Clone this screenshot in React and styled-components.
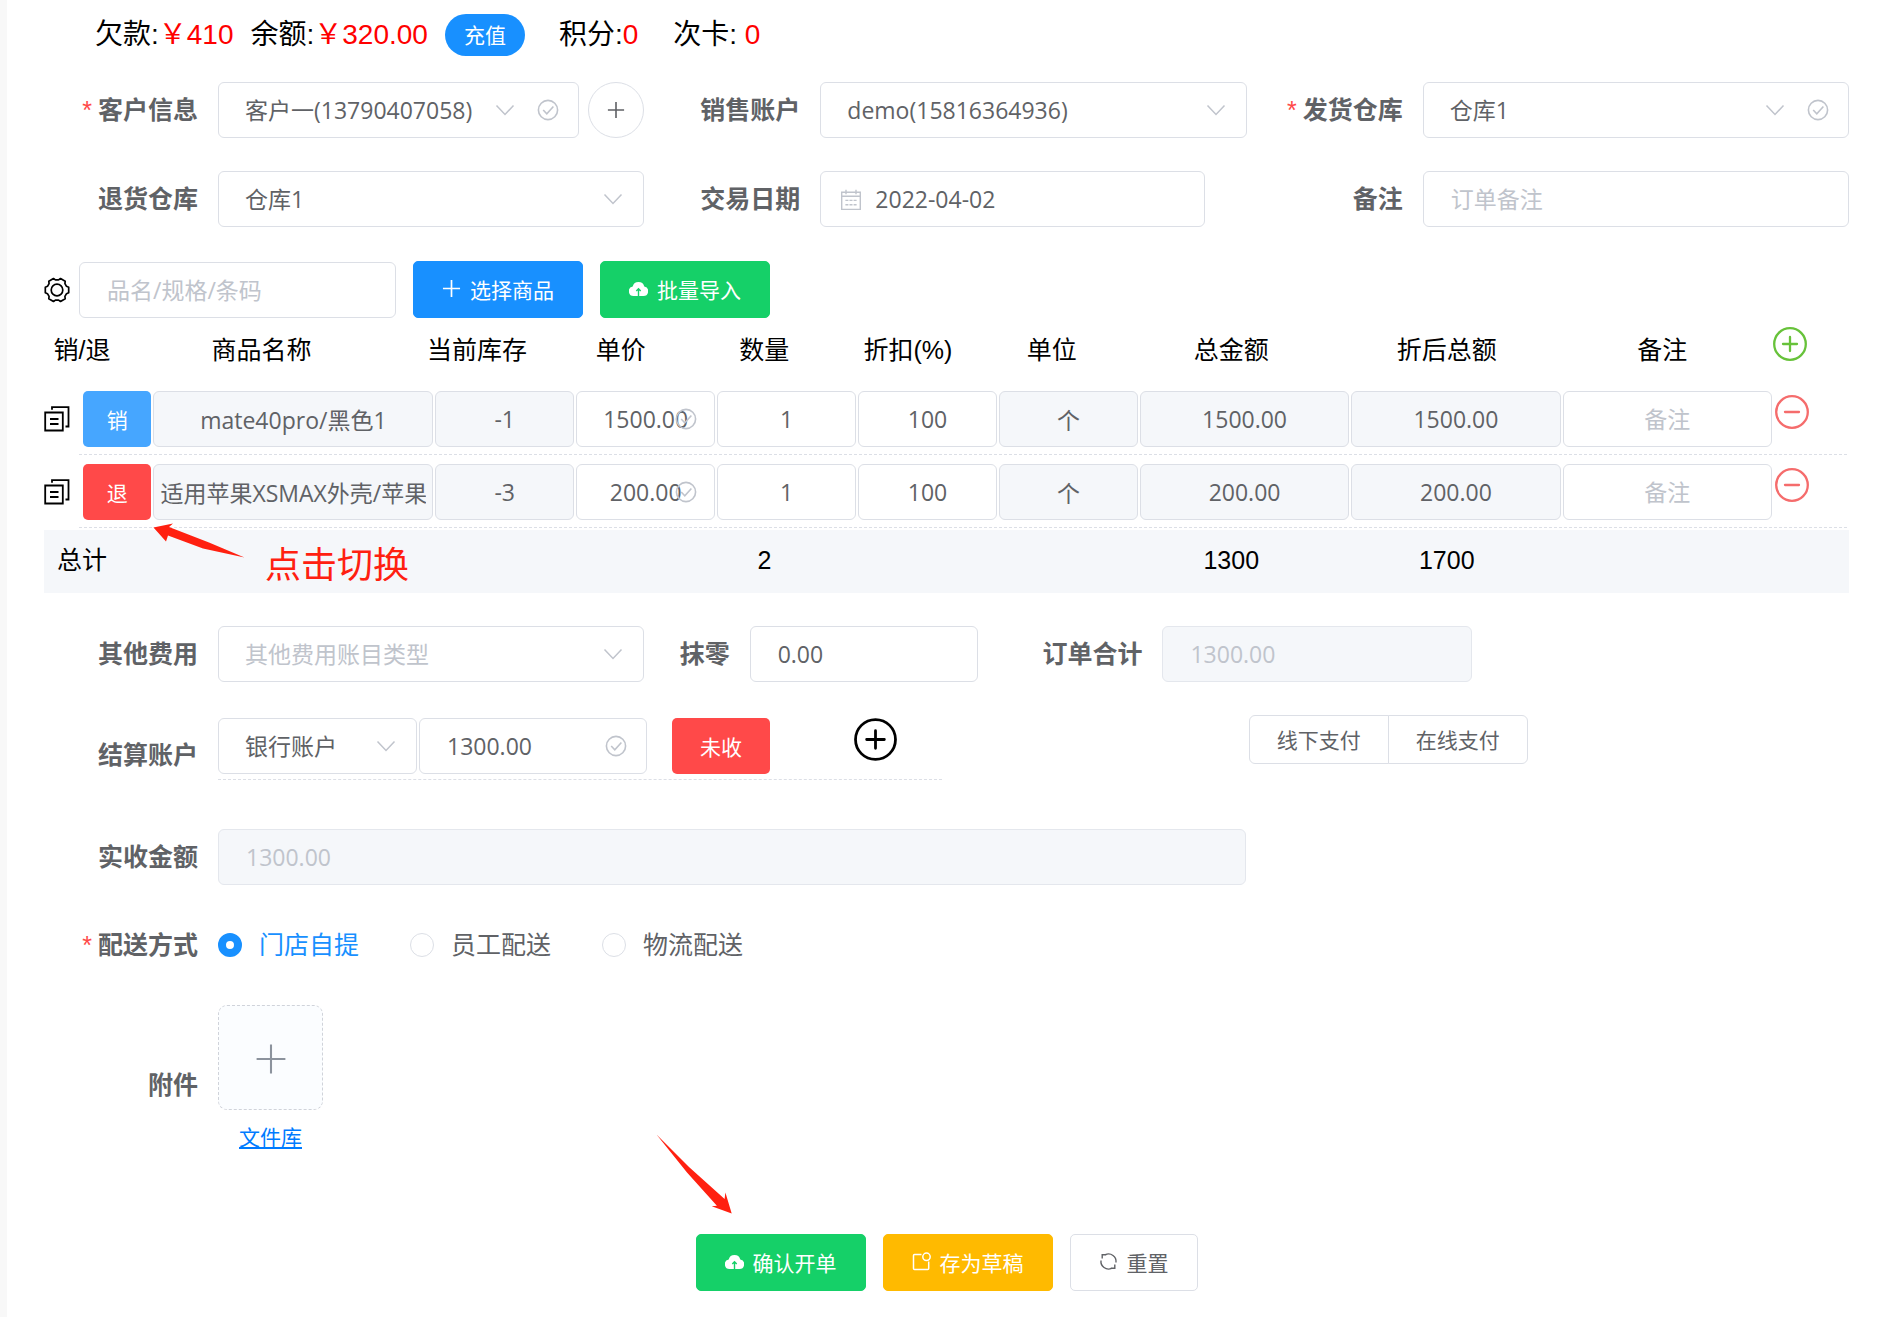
import React, { useState } from "react";
import styled, { createGlobalStyle, css } from "styled-components";

const GlobalStyle = createGlobalStyle`
  * {
    box-sizing: border-box;
  }
  body {
    margin: 0;
    background: #fff;
    color: #000;
    font-family: "Liberation Sans", "Noto Sans CJK SC", sans-serif;
    font-size: 25px;
  }
  button,
  input,
  select {
    margin: 0;
    font-family: "Open Sans", "Noto Sans CJK SC", sans-serif;
  }
`;

const Page = styled.main`
  border-left: 7px solid #f8f8f8;
  padding: 14px 42px 26px 37px;
`;

/* account summary */

const Summary = styled.header`
  display: flex;
  align-items: center;
  height: 42px;
  margin-bottom: 26px;
  padding-left: 51px;
  font-size: 28px;
  line-height: 42px;
  white-space: pre;
`;

const SummaryItem = styled.span`
  margin-right: ${(props) => (props.$wide ? "35px" : "17px")};
`;

const Amount = styled.span`
  color: #f00;
`;

const RechargeButton = styled.button`
  height: 42px;
  margin-right: 34px;
  padding: 0 19px 2px;
  border: 0;
  border-radius: 21px;
  background: #1890ff;
  color: #fff;
  font-size: 21px;
`;

/* form parts */

const FormGrid = styled.div`
  display: grid;
  grid-template-columns: ${(props) => props.$columns || "1fr 1fr 1fr"};
  gap: 33px 2px;
  margin-bottom: ${(props) => props.$bottom || "33px"};
`;

const FormItem = styled.div`
  display: flex;
  align-items: center;
  min-width: 0;
  min-height: ${(props) => props.$height || "56px"};
`;

const StyledLabel = styled.label`
  flex: none;
  width: ${(props) => props.$width || "174px"};
  padding-right: 20px;
  color: #606266;
  font-size: 25px;
  font-weight: bold;
  line-height: 36px;
  text-align: right;
  white-space: nowrap;

  ${(props) =>
    props.$required &&
    css`
      &::before {
        content: "*";
        margin-right: 6px;
        color: #ff4949;
        font-weight: normal;
      }
    `}
`;

const FieldBox = styled.div`
  position: relative;
  flex: ${(props) => (props.$width ? "none" : "1")};
  width: ${(props) => props.$width || "auto"};
  min-width: 0;
`;

const controlStyle = css`
  display: block;
  width: 100%;
  height: 56px;
  border: 1px solid #dcdfe6;
  border-radius: 6px;
  outline: none;
  background: #fff;
  color: #606266;
  font-size: 23px;

  &::placeholder {
    color: #c0c4cc;
    opacity: 1;
  }
`;

const TextInput = styled.input`
  ${controlStyle}
  padding: 0 26px 0 ${(props) => (props.$prefixed ? "54px" : "27px")};

  &:disabled {
    border-color: #e4e7ed;
    background: #f5f7fa;
    color: #c0c4cc;
  }
`;

const StyledSelect = styled.select`
  ${controlStyle}
  appearance: none;
  padding: 0 26px;
  color: ${(props) => (props.$empty ? "#c0c4cc" : "#606266")};
`;

const Prefix = styled.span`
  position: absolute;
  top: 17px;
  left: 20px;
  height: 22px;
  color: #c0c4cc;
  pointer-events: none;
`;

const Suffix = styled.span`
  position: absolute;
  top: 17px;
  right: 20px;
  display: flex;
  gap: 21px;
  height: 22px;
  color: #c0c4cc;
  pointer-events: none;
`;

const RoundButton = styled.button`
  display: flex;
  flex: none;
  align-items: center;
  justify-content: center;
  width: 56px;
  height: 56px;
  margin-left: 9px;
  padding: 0;
  border: 1px solid #dcdfe6;
  border-radius: 50%;
  background: #fff;
  color: #606266;
`;

const IconButton = styled.button`
  display: flex;
  flex: none;
  padding: 0;
  border: 0;
  background: none;
  color: ${(props) => props.$color || "#000"};
`;

const Button = styled.button`
  position: relative;
  display: flex;
  flex: none;
  align-items: center;
  justify-content: center;
  gap: 9px;
  height: 57px;
  padding: 0 28px 2px;
  border: 1px solid ${(props) => props.$border || props.$color};
  border-radius: 5px;
  background: ${(props) => props.$color};
  color: ${(props) => props.$text || "#fff"};
  font-size: 21px;
  white-space: nowrap;
`;

const StateButton = styled.button`
  width: ${(props) => props.$width || "100%"};
  height: 56px;
  padding: 0;
  border: 0;
  border-radius: 5px;
  background: ${(props) => props.$color};
  color: #fff;
  font-size: 21px;
`;

const Toolbar = styled.div`
  display: flex;
  align-items: center;
  gap: 17px;
`;

const SearchGroup = styled.div`
  display: flex;
  align-items: center;
  gap: 9px;
`;

/* goods table */

const GoodsTable = styled.table`
  position: relative;
  display: block;
  margin-bottom: 33px;

  thead,
  tbody,
  tfoot {
    display: block;
  }
`;

const summaryColumns = css`
  display: grid;
  grid-template-columns: 1fr 4fr 2fr 2fr 2fr 2fr 2fr 3fr 3fr 3fr 79px;
  padding-left: 2px;
`;

const HeadRow = styled.tr`
  ${summaryColumns}
  height: 64px;
  line-height: 65px;
`;

const HeadCell = styled.th`
  padding: 0;
  font-weight: normal;
  text-align: center;
  white-space: nowrap;
`;

const AddCell = styled.td`
  padding: 9px 0 0 3px;
`;

const GoodsRow = styled.tr`
  display: grid;
  grid-template-columns: 39px 1fr 4fr 2fr 2fr 2fr 2fr 2fr 3fr 3fr 3fr 75px;
  padding: 9px 0 8px;
  background: repeating-linear-gradient(
      90deg,
      #dcdfe6 0 3px,
      transparent 3px 5px
    )
    right bottom / calc(100% - 35px) 1px no-repeat;
`;

const GoodsCell = styled.td`
  position: relative;
  min-width: 0;
  padding: 0 2px 0 0;
`;

const CopyCell = styled.td`
  display: flex;
  align-items: center;
  padding: 0;
`;

const RemoveCell = styled.td`
  padding: 4px 0 0 1px;
`;

const CellInput = styled.input`
  ${controlStyle}
  padding: 0 6px;
  text-align: center;

  &:read-only {
    background: #f5f7fa;
  }
`;

const TotalRow = styled.tr`
  ${summaryColumns}
  height: 63px;
  margin-top: 2px;
  background: #f5f7fa;
  line-height: 60px;
`;

const TotalCell = styled.td`
  padding: 0;
  text-align: center;
  white-space: nowrap;
`;

const SwitchNote = styled.aside`
  position: absolute;
  bottom: 0;
  left: 109px;
  display: flex;
  gap: 20px;
  height: 70px;
  color: #ff2010;
  font-size: 36px;
  line-height: 86px;
  white-space: nowrap;
`;

/* settlement */

const Settlement = styled.div`
  display: flex;
  flex: 1;
  align-self: flex-start;
  margin-right: 3px;
  padding: 3px 0 5px;
  border-bottom: 1px dashed #dcdfe6;
`;

const SettlementFields = styled.div`
  display: flex;
  gap: 2px;
  margin-right: 25px;
`;

const AddAccount = styled.div`
  margin-left: 84px;
`;

const PayGroup = styled.div`
  display: flex;
  align-self: flex-start;
  height: 49px;
`;

const PayButton = styled.button`
  padding: 0 27px 2px;
  border: 1px solid #dcdfe6;
  border-radius: 6px 0 0 6px;
  background: #fff;
  color: #606266;
  font-size: 21px;
  white-space: nowrap;

  & + & {
    margin-left: -1px;
    border-radius: 0 6px 6px 0;
  }
`;

const RadioLabel = styled.label`
  display: flex;
  align-items: center;
  gap: 17px;
  margin-right: 51px;
  color: ${(props) => (props.$checked ? "#1890ff" : "#606266")};
  line-height: 36px;
  white-space: nowrap;
`;

const Radio = styled.input`
  appearance: none;
  width: 24px;
  height: 24px;
  border: 1px solid #dcdfe6;
  border-radius: 50%;
  background: #fff;

  &:checked {
    border: 8px solid #1890ff;
  }
`;

const Attachment = styled.div`
  display: flex;
  flex-direction: column;
  align-items: center;
  gap: 14px;
  height: 160px;
`;

const UploadButton = styled.button`
  display: flex;
  align-items: center;
  justify-content: center;
  width: 105px;
  height: 105px;
  padding: 3px 0 0;
  border: 1px dashed #d0d3da;
  border-radius: 9px;
  background: #fbfdff;
  color: #8c939d;
`;

const LibraryLink = styled.a`
  color: #007bff;
  font-size: 21px;
  line-height: 28px;
`;

const Actions = styled.footer`
  display: flex;
  justify-content: center;
  gap: 17px;
  margin-top: 69px;
`;

const ConfirmArrow = styled.svg`
  position: absolute;
  bottom: 74px;
  left: -41px;
`;

const PlusIcon = ({ size = 20, width = 2 }) => (
  <svg width={size} height={size} viewBox="0 0 20 20" fill="none" stroke="currentColor" strokeWidth={width}>
    <path d="M10 1v18M1 10h18" />
  </svg>
);

const ChevronIcon = () => (
  <svg width="22" height="22" viewBox="0 0 22 22" fill="none" stroke="currentColor" strokeWidth="1.5">
    <path d="M2.5 6.5 11 15.5 19.5 6.5" />
  </svg>
);

const CheckIcon = () => (
  <svg width="22" height="22" viewBox="0 0 22 22" fill="none" stroke="currentColor" strokeWidth="1.6">
    <circle cx="11" cy="11" r="9.6" />
    <path d="m6.2 11 3.6 3.8 6.6-7.3" />
  </svg>
);

const CalendarIcon = () => (
  <svg width="22" height="22" viewBox="0 0 22 22" fill="none" stroke="currentColor" strokeWidth="1.4">
    <path d="M1.7 3.2h18.6v17.2H1.7zM1.7 7.2h18.6M6 .8v4.4M16 .8v4.4" />
    <path d="M5.4 11.4h3M9.5 11.4h3M13.6 11.4h3M5.4 15.8h3M9.5 15.8h3M13.6 15.8h3" />
  </svg>
);

const CloudIcon = () => (
  <svg width="19" height="19" viewBox="0 0 19 19" fill="none">
    <path
      d="M4.8 17A4.8 4.8 0 0 1 3.7 7.5a6 6 0 0 1 11.6 0A4.8 4.8 0 0 1 14.2 17z"
      fill="currentColor"
    />
    <path d="M9.5 17v-6M7.3 12l2.2-2.2 2.2 2.2" stroke="#15d068" strokeWidth="1.4" />
  </svg>
);

const DraftIcon = () => (
  <svg width="19" height="19" viewBox="0 0 19 19" fill="none" stroke="currentColor" strokeWidth="1.5">
    <path d="M9.5 2.5h-7a1 1 0 0 0-1 1v13a1 1 0 0 0 1 1h13.2a1 1 0 0 0 1-1V9.5" />
    <circle cx="14.5" cy="4.8" r="3.7" />
  </svg>
);

const RefreshIcon = () => (
  <svg width="19" height="19" viewBox="0 0 19 19" fill="none" stroke="currentColor" strokeWidth="1.4">
    <path d="M6.4 2.600A7.600 7.600 0 0 1 17 10.500M12.600 16.400A7.600 7.600 0 0 1 2 8.500" />
    <path d="M3.200 6.500V2.800h4M15.800 12.500v3.700h-4" />
  </svg>
);

// six teeth around a ring, each given as [angle offset, radius]
const tooth = [
  [-21, 10.2],
  [-13, 12],
  [13, 12],
  [21, 10.2],
];
const gearPoints = [0, 60, 120, 180, 240, 300]
  .flatMap((base) =>
    tooth.map(([offset, radius]) => {
      const angle = ((base + offset) * Math.PI) / 180;
      return `${13 + radius * Math.cos(angle)},${13 + radius * Math.sin(angle)}`;
    })
  )
  .join(" ");

const GearIcon = () => (
  <svg width="26" height="26" viewBox="0 0 26 26" fill="none" stroke="currentColor" strokeWidth="1.7" strokeLinejoin="round">
    <polygon points={gearPoints} />
    <circle cx="13" cy="13" r="5.8" />
  </svg>
);

const CopyIcon = () => (
  <svg width="26" height="26" viewBox="0 0 26 26" fill="none" stroke="currentColor" strokeWidth="1.8">
    <path d="M1.2 6.5h17.6v18H1.2z" />
    <path d="M8 3.800V1.200h16.500v19.300h-3M6 13h8.500M6 18h8.500" />
  </svg>
);

const CircleIcon = ({ size, width, minus }) => (
  <svg width={size} height={size} viewBox="0 0 34 34" fill="none" stroke="currentColor" strokeWidth={width} strokeLinecap="round">
    <circle cx="17" cy="17" r="15.8" />
    <path d={minus ? "M10 17h14" : "M17 10v14M10 17h14"} />
  </svg>
);

const Field = ({ id, label, required, labelWidth, fieldWidth, children, after }) => (
  <FormItem>
    <StyledLabel htmlFor={id} $required={required} $width={labelWidth}>
      {label}
    </StyledLabel>
    <FieldBox $width={fieldWidth}>{children}</FieldBox>
    {after}
  </FormItem>
);

const Select = ({ id, option, empty, checked, ...props }) => (
  <>
    <StyledSelect id={id} $empty={empty} {...props}>
      <option>{option}</option>
    </StyledSelect>
    <Suffix>
      <ChevronIcon />
      {checked && <CheckIcon />}
    </Suffix>
  </>
);

const columns = [
  "销/退",
  "商品名称",
  "当前库存",
  "单价",
  "数量",
  "折扣(%)",
  "单位",
  "总金额",
  "折后总额",
  "备注",
];

const initialGoods = [
  { id: 1, returned: false, name: "mate40pro/黑色1", stock: "-1", price: "1500.00", total: "1500.00" },
  { id: 2, returned: true, name: "适用苹果XSMAX外壳/苹果", stock: "-3", price: "200.00", total: "200.00" },
];

const totals = ["总计", "", "", "", "2", "", "", "1300", "1700", ""];

const deliveries = ["门店自提", "员工配送", "物流配送"];

const Goods = () => {
  const [goods, setGoods] = useState(initialGoods);

  const toggle = (id) =>
    setGoods(goods.map((item) => (item.id === id ? { ...item, returned: !item.returned } : item)));

  return (
    <GoodsTable>
      <thead>
        <HeadRow>
          {columns.map((name) => (
            <HeadCell key={name}>{name}</HeadCell>
          ))}
          <AddCell>
            <IconButton type="button" aria-label="添加" $color="#67c23a">
              <CircleIcon size={34} width={2.3} />
            </IconButton>
          </AddCell>
        </HeadRow>
      </thead>
      <tbody>
        {goods.map((item) => (
          <GoodsRow key={item.id}>
            <CopyCell>
              <IconButton type="button" aria-label="复制">
                <CopyIcon />
              </IconButton>
            </CopyCell>
            <GoodsCell>
              <StateButton
                type="button"
                $color={item.returned ? "#ff4949" : "#46a6ff"}
                onClick={() => toggle(item.id)}
              >
                {item.returned ? "退" : "销"}
              </StateButton>
            </GoodsCell>
            <GoodsCell>
              <CellInput aria-label="商品名称" readOnly value={item.name} />
            </GoodsCell>
            <GoodsCell>
              <CellInput aria-label="当前库存" readOnly value={item.stock} />
            </GoodsCell>
            <GoodsCell>
              <CellInput aria-label="单价" defaultValue={item.price} />
              <Suffix>
                <CheckIcon />
              </Suffix>
            </GoodsCell>
            <GoodsCell>
              <CellInput aria-label="数量" defaultValue="1" />
            </GoodsCell>
            <GoodsCell>
              <CellInput aria-label="折扣" defaultValue="100" />
            </GoodsCell>
            <GoodsCell>
              <CellInput aria-label="单位" readOnly value="个" />
            </GoodsCell>
            <GoodsCell>
              <CellInput aria-label="总金额" readOnly value={item.total} />
            </GoodsCell>
            <GoodsCell>
              <CellInput aria-label="折后总额" readOnly value={item.total} />
            </GoodsCell>
            <GoodsCell>
              <CellInput aria-label="备注" placeholder="备注" />
            </GoodsCell>
            <RemoveCell>
              <IconButton type="button" aria-label="删除" $color="#f56c6c">
                <CircleIcon size={34} width={2.3} minus />
              </IconButton>
            </RemoveCell>
          </GoodsRow>
        ))}
      </tbody>
      <tfoot>
        <TotalRow>
          {totals.map((value, index) => (
            <TotalCell key={columns[index]}>{value}</TotalCell>
          ))}
        </TotalRow>
      </tfoot>
      <caption>
        <SwitchNote>
          <svg width="92" height="36" viewBox="0 0 92 36" fill="#ff2010">
            <path d="M.5 4.500 20 .5l-4 3.500 40 15.500 35.500 15L50 25.500 15 12.500l-2 6z" />
          </svg>
          点击切换
        </SwitchNote>
      </caption>
    </GoodsTable>
  );
};

const App = () => {
  const [delivery, setDelivery] = useState(deliveries[0]);

  return (
    <>
      <GlobalStyle />
      <Page>
        <Summary>
          <SummaryItem>
            欠款:<Amount>￥410</Amount>
          </SummaryItem>
          <SummaryItem>
            余额:<Amount>￥320.00</Amount>
          </SummaryItem>
          <RechargeButton type="button">充值</RechargeButton>
          <SummaryItem $wide>
            积分:<Amount>0</Amount>
          </SummaryItem>
          <SummaryItem>
            次卡: <Amount>0</Amount>
          </SummaryItem>
        </Summary>

        <FormGrid $bottom="34px">
          <Field
            id="customer"
            label="客户信息"
            required
            after={
              <RoundButton type="button" aria-label="新增客户">
                <PlusIcon size={18} width={1.8} />
              </RoundButton>
            }
          >
            <Select id="customer" option="客户一(13790407058)" checked />
          </Field>
          <Field id="seller" label="销售账户">
            <Select id="seller" option="demo(15816364936)" />
          </Field>
          <Field id="outStore" label="发货仓库" required>
            <Select id="outStore" option="仓库1" checked />
          </Field>
          <Field id="backStore" label="退货仓库">
            <Select id="backStore" option="仓库1" />
          </Field>
          <Field id="date" label="交易日期" fieldWidth="385px">
            <TextInput id="date" defaultValue="2022-04-02" $prefixed />
            <Prefix>
              <CalendarIcon />
            </Prefix>
          </Field>
          <Field id="remark" label="备注">
            <TextInput id="remark" placeholder="订单备注" />
          </Field>
        </FormGrid>

        <Toolbar>
          <SearchGroup>
            <IconButton type="button" aria-label="设置">
              <GearIcon />
            </IconButton>
            <FieldBox $width="317px">
              <TextInput aria-label="搜索商品" placeholder="品名/规格/条码" />
            </FieldBox>
          </SearchGroup>
          <Button type="button" $color="#1890ff">
            <PlusIcon size={19} width={1.8} />
            选择商品
          </Button>
          <Button type="button" $color="#15d068">
            <CloudIcon />
            批量导入
          </Button>
        </Toolbar>

        <Goods />

        <FormGrid $columns="8fr 5fr 6fr 5fr">
          <Field id="fee" label="其他费用">
            <Select id="fee" option="其他费用账目类型" empty />
          </Field>
          <Field id="round" label="抹零" labelWidth="104px" fieldWidth="228px">
            <TextInput id="round" defaultValue="0.00" />
          </Field>
          <Field id="orderTotal" label="订单合计" labelWidth="140px">
            <TextInput id="orderTotal" disabled value="1300.00" />
          </Field>
        </FormGrid>

        <FormGrid $columns="12fr 4fr 8fr" $bottom="34px">
          <FormItem $height="80px">
            <StyledLabel htmlFor="account">结算账户</StyledLabel>
            <Settlement>
              <SettlementFields>
                <FieldBox $width="199px">
                  <Select id="account" option="银行账户" />
                </FieldBox>
                <FieldBox $width="228px">
                  <TextInput aria-label="结算金额" defaultValue="1300.00" />
                  <Suffix>
                    <CheckIcon />
                  </Suffix>
                </FieldBox>
              </SettlementFields>
              <StateButton type="button" $color="#ff4949" $width="98px">
                未收
              </StateButton>
              <AddAccount>
                <IconButton type="button" aria-label="添加账户">
                  <CircleIcon size={43} width={2.2} />
                </IconButton>
              </AddAccount>
            </Settlement>
          </FormItem>
          <span />
          <PayGroup>
            <PayButton type="button">线下支付</PayButton>
            <PayButton type="button">在线支付</PayButton>
          </PayGroup>
        </FormGrid>

        <FormGrid $columns="2fr 1fr" $bottom="32px">
          <Field id="received" label="实收金额">
            <TextInput id="received" disabled value="1300.00" />
          </Field>
        </FormGrid>

        <FormGrid $columns="1fr" $bottom="32px">
          <FormItem role="radiogroup" aria-labelledby="deliveryLabel">
            <StyledLabel as="span" id="deliveryLabel" $required>
              配送方式
            </StyledLabel>
            {deliveries.map((name) => (
              <RadioLabel key={name} $checked={delivery === name}>
                <Radio
                  type="radio"
                  name="delivery"
                  checked={delivery === name}
                  onChange={() => setDelivery(name)}
                />
                {name}
              </RadioLabel>
            ))}
          </FormItem>
        </FormGrid>

        <FormItem>
          <StyledLabel as="span">附件</StyledLabel>
          <Attachment>
            <UploadButton type="button" aria-label="上传附件">
              <PlusIcon size={32} width={1.3} />
            </UploadButton>
            <LibraryLink href="#library">文件库</LibraryLink>
          </Attachment>
        </FormItem>

        <Actions>
          <Button type="button" $color="#15d068">
            <CloudIcon />
            确认开单
            <ConfirmArrow width="78" height="82" viewBox="0 0 78 82" fill="#ff2010">
              <path d="M.5.5 33 33l35.600 32 .8-6.500 6.300 21-20-7.200 5.200-.6L31 38.500z" />
            </ConfirmArrow>
          </Button>
          <Button type="button" $color="#ffba00">
            <DraftIcon />
            存为草稿
          </Button>
          <Button type="button" $color="#fff" $border="#dcdfe6" $text="#606266">
            <RefreshIcon />
            重置
          </Button>
        </Actions>
      </Page>
    </>
  );
};

export default App;
